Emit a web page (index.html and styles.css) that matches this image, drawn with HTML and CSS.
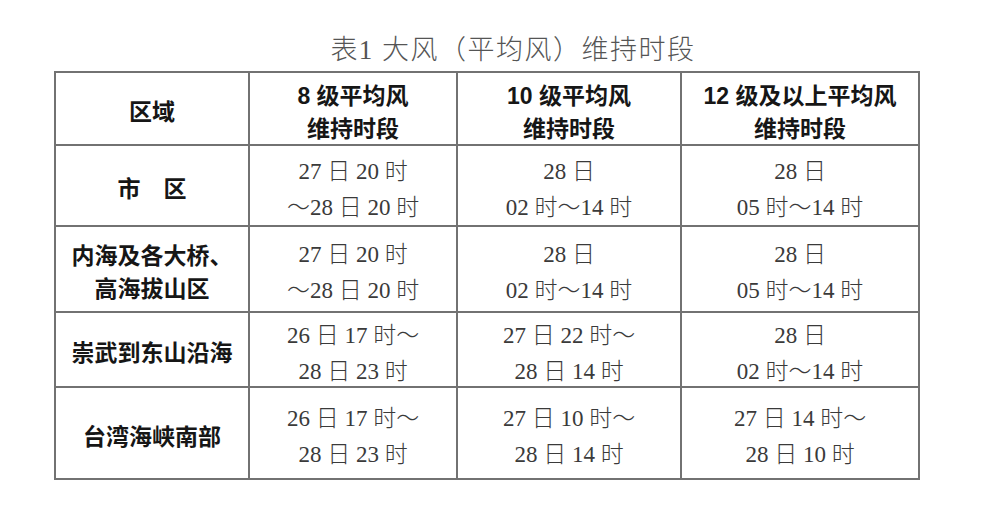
FILE: index.html
```html
<!DOCTYPE html>
<html lang="zh-CN">
<head>
<meta charset="utf-8">
<title>表1 大风（平均风）维持时段</title>
<link rel="stylesheet" href="styles.css">
</head>
<body>
<div class="page">
  <h1 class="title">表1 大风（平均风）维持时段</h1>
  <table class="wind">
    <colgroup>
      <col class="c-area">
      <col class="c-8">
      <col class="c-10">
      <col class="c-12">
    </colgroup>
    <thead>
      <tr class="r-head">
        <th><span class="cell">区域</span></th>
        <th><span class="cell">8 级平均风<br>维持时段</span></th>
        <th><span class="cell">10 级平均风<br>维持时段</span></th>
        <th><span class="cell">12 级及以上平均风<br>维持时段</span></th>
      </tr>
    </thead>
    <tbody>
      <tr class="r1">
        <th><span class="cell">市　区</span></th>
        <td><span class="cell">27 日 20 时<br>～28 日 20 时</span></td>
        <td><span class="cell">28 日<br>02 时～14 时</span></td>
        <td><span class="cell">28 日<br>05 时～14 时</span></td>
      </tr>
      <tr class="r2">
        <th><span class="cell">内海及各大桥、<br>高海拔山区</span></th>
        <td><span class="cell">27 日 20 时<br>～28 日 20 时</span></td>
        <td><span class="cell">28 日<br>02 时～14 时</span></td>
        <td><span class="cell">28 日<br>05 时～14 时</span></td>
      </tr>
      <tr class="r3">
        <th><span class="cell">崇武到东山沿海</span></th>
        <td><span class="cell">26 日 17 时～<br>28 日 23 时</span></td>
        <td><span class="cell">27 日 22 时～<br>28 日 14 时</span></td>
        <td><span class="cell">28 日<br>02 时～14 时</span></td>
      </tr>
      <tr class="r4">
        <th><span class="cell">台湾海峡南部</span></th>
        <td><span class="cell">26 日 17 时～<br>28 日 23 时</span></td>
        <td><span class="cell">27 日 10 时～<br>28 日 14 时</span></td>
        <td><span class="cell">27 日 14 时～<br>28 日 10 时</span></td>
      </tr>
    </tbody>
  </table>
</div>
</body>
</html>
```

FILE: styles.css
```css
html, body {
  margin: 0;
  padding: 0;
  background: #ffffff;
}

.page {
  width: 1000px;
  height: 508px;
  padding-top: 34px;
  box-sizing: border-box;
  overflow: hidden;
}

.title {
  margin: 0 0 5px 0;
  padding-left: 26px;
  text-align: center;
  font-family: "Liberation Serif", "Noto Sans CJK SC", serif;
  font-weight: 300;
  font-size: 27px;
  line-height: 32px;
  letter-spacing: 1.5px;
  color: #555555;
}

.wind {
  margin-left: 54px;
  border-collapse: collapse;
  table-layout: fixed;
  width: 864px;
}

.c-area { width: 194px; }
.c-8 { width: 208px; }
.c-10 { width: 224px; }
.c-12 { width: 238px; }

.wind th,
.wind td {
  border: 2px solid #727272;
  padding: 0;
  text-align: center;
  vertical-align: middle;
}

.cell {
  display: block;
  margin: 4px 0 -4px;
}

.wind th {
  font-family: "Liberation Sans", "Noto Sans CJK SC", sans-serif;
  font-weight: bold;
  font-size: 23px;
  line-height: 33px;
  color: #161616;
}

.wind td {
  font-family: "Liberation Serif", "Noto Sans CJK SC", serif;
  font-weight: 300;
  font-size: 23px;
  line-height: 36px;
  color: #3a3a3a;
}

.r-head { height: 73px; }
.r1 { height: 81px; }
.r2 { height: 86px; }
.r3 { height: 75px; }
.r4 { height: 92px; }
```
